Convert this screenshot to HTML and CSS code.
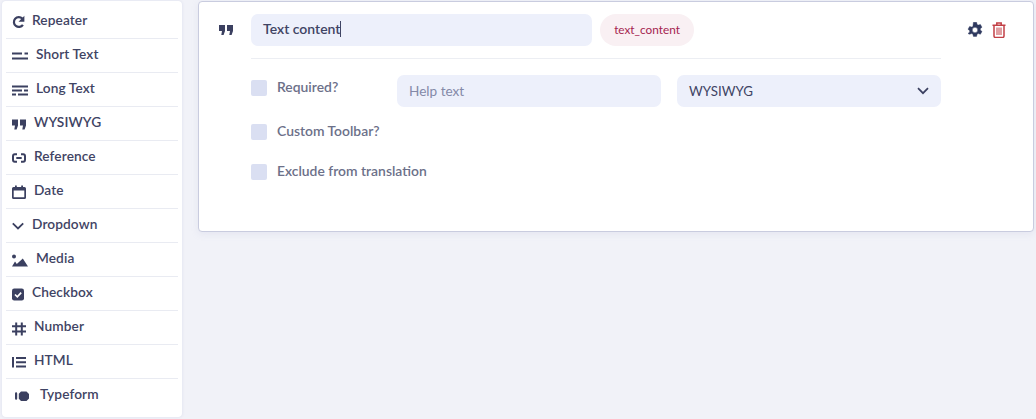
FILE: index.html
```html
<!DOCTYPE html>
<html lang="en">
<head>
<meta charset="utf-8">
<title>Field editor</title>
<link rel="stylesheet" href="styles.css">
</head>
<body>
<div class="page">
  <aside class="sidebar">
    <div class="item"><svg class="ic w14" viewBox="0 0 14 14"><path d="M10.300 3.600A4.900 4.900 0 1 0 10.900 9.800" fill="none" stroke="#3b4060" stroke-width="2.200"/><path d="M12.400 .8v5.900H6.500z" fill="#3b4060"/></svg><span>Repeater</span></div>
    <div class="item"><svg class="ic w16 mr2" viewBox="0 0 16 14"><path d="M0 3.500h10v2H0zM12.500 3.500H16v2h-3.500zM0 8.500h16v2H0z" fill="#3b4060"/></svg><span>Short Text</span></div>
    <div class="item"><svg class="ic w16 mr2" viewBox="0 0 16 14"><path d="M0 2.400h16v2H0zM0 6.500h10v2H0zM12 6.500h4v2h-4zM0 10.600h4v2H0zM6 10.600h10v2H6z" fill="#3b4060"/></svg><span>Long Text</span></div>
    <div class="item"><svg class="ic w14 mr2" viewBox="0 0 14 14"><path d="M0 2.500h6v6l-1.400 4H2.300l.7-4H0zM8 2.500h6v6l-1.400 4h-2.300l.7-4H8z" fill="#3b4060"/></svg><span>WYSIWYG</span></div>
    <div class="item"><svg class="ic w14 mr2" viewBox="0 0 14 14"><path d="M5 3.300H2.800Q1 3.300 1 5.200v3.600q0 1.900 1.800 1.900H5M9 3.300h2.200Q13 3.300 13 5.200v3.600q0 1.900-1.800 1.900H9M4.300 7h5.400" fill="none" stroke="#3b4060" stroke-width="2"/></svg><span>Reference</span></div>
    <div class="item"><svg class="ic w14 mr2" viewBox="0 0 14 14"><path d="M3 .5h1.800V2h4.400V.5H11V2h1.500Q14 2 14 3.500v9Q14 14 12.500 14h-11Q0 14 0 12.500v-9Q0 2 1.500 2H3zM1.700 5.500v6.800h10.600V5.500z" fill="#3b4060"/></svg><span>Date</span></div>
    <div class="item"><svg class="ic w14" viewBox="0 0 14 14"><path d="M.8 4.300L6 9.500l5.200-5.200" fill="none" stroke="#3b4060" stroke-width="1.800"/></svg><span>Dropdown</span></div>
    <div class="item"><svg class="ic w16 mr2" viewBox="0 0 16 14"><circle cx="2" cy="3.500" r="2" fill="#3b4060"/><path d="M0 13.500L3 8.500l1.800 2.600L10.800 5.500l5.200 8z" fill="#3b4060"/></svg><span>Media</span></div>
    <div class="item"><svg class="ic w14" viewBox="0 0 14 14"><rect y="1.500" width="12" height="12" rx="2.200" fill="#3b4060"/><path d="M3 7.500l2.300 2.300L9.200 5.600" fill="none" stroke="#fff" stroke-width="1.700"/></svg><span>Checkbox</span></div>
    <div class="item"><svg class="ic w14 mr2" viewBox="0 0 14 14"><path d="M0 5.300h14M0 10.500h14M4.200 1.500v13M9.800 1.500v13" fill="none" stroke="#3b4060" stroke-width="2"/></svg><span>Number</span></div>
    <div class="item"><svg class="ic w14 mr2" viewBox="0 0 14 14"><path d="M0 2h2v10.500H0zM4 2h10v2H4zM4 6.300h10v2H4zM4 10.500h10v2H4z" fill="#3b4060"/></svg><span>HTML</span></div>
    <div class="item item-last"><svg class="ic w14 mr5" viewBox="0 0 14 14"><path d="M0 4.500Q0 3.300 1.100 3.300T2.200 4.500v5q0 1.200-1.100 1.200T0 9.500zM6 2.500h5.500L14 5v4.500l-2.500 2.500H6L3.800 9.800V4.700z" fill="#3b4060"/></svg><span>Typeform</span></div>
  </aside>
  <main class="main">
    <section class="card">
      <svg class="quote" viewBox="0 0 14 14"><path d="M0 2h6v6l-1.400 4H2.300l.7-4H0zM8 2h6v6l-1.400 4h-2.300l.7-4H8z" fill="#3b4060"/></svg>
      <div class="body">
        <div class="head">
          <div class="title-input"><span>Text content</span><i class="caret"></i></div>
          <div class="pill">text_content</div>
          <div class="actions">
            <svg class="gear" viewBox="0 0 16 16"><path fill-rule="evenodd" d="M6.400.3h3.200l.5 2.200 1.100.6 2.200-.7 1.600 2.800-1.700 1.500v1.300l1.700 1.500-1.600 2.800-2.200-.7-1.100.6-.5 2.200H6.400l-.5-2.200-1.100-.6-2.200.7L1 11.500 2.700 10V8.700L1 7.200l1.600-2.800 2.200.7 1.100-.6zM8 5.300a2.700 2.700 0 1 0 0 5.400 2.700 2.700 0 0 0 0-5.400z" fill="#2f3a5f" stroke="#2f3a5f" stroke-width=".4" stroke-linejoin="round"/></svg>
            <svg class="trash" viewBox="0 0 14 16"><path d="M.5 3.200h13M4.800 3V.9h4.400V3M2 3.200v10.900q0 1.300 1.300 1.300h7.400q1.300 0 1.300-1.300V3.200" fill="none" stroke="#c23f45" stroke-width="1.500"/><path d="M5 5.500v7.500M7 5.500v7.500M9 5.500v7.500" stroke="#c23f45" stroke-width="1"/></svg>
          </div>
        </div>
        <div class="rows">
          <div class="row-top">
            <label class="check"><span class="box"></span><span class="lab">Required?</span></label>
            <div class="field help">Help text</div>
            <div class="field select">WYSIWYG<svg class="chev" viewBox="0 0 12 8"><path d="M1 1.200l5 5 5-5" fill="none" stroke="#3b4060" stroke-width="1.700"/></svg></div>
          </div>
          <label class="check"><span class="box"></span><span class="lab">Custom Toolbar?</span></label>
          <label class="check"><span class="box"></span><span class="lab">Exclude from translation</span></label>
        </div>
      </div>
    </section>
  </main>
</div>
</body>
</html>
```
FILE: styles.css
```css
* { box-sizing: border-box; }
html, body { margin: 0; height: 100%; }
body {
  background: #f1f2f8;
  font-family: "Lato", "Liberation Sans", sans-serif;
  color: #3f4464;
  overflow: hidden;
}
.page { display: flex; align-items: flex-start; gap: 16px; padding: 1px 2px 0; }
.sidebar {
  width: 180px;
  height: 416px;
  flex: none;
  padding: 4px 4px 0;
  background: #fff;
  border-radius: 4px;
  box-shadow: 0 0 3px rgba(190, 195, 225, .45);
}
.item {
  height: 34px;
  display: flex;
  align-items: center;
  gap: 6px;
  padding: 0 0 4px 6px;
  border-bottom: 1px solid #e9ebf2;
  font-size: 13.700px;
  font-weight: 600;
  letter-spacing: .1px;
}
.item-last { border-bottom: 0; padding: 0 0 6px 9px; }
.ic { height: 14px; flex: none; margin-top: 4px; overflow: visible; }
.item-last .ic { margin-top: 6px; }
.w14 { width: 14px; }
.w16 { width: 16px; }
.mr2 { margin-right: 2px; }
.mr5 { margin-right: 5px; }
.main { flex: 1; min-width: 0; }
.card {
  height: 231px;
  display: flex;
  padding: 12px 0 0 20px;
  background: #fff;
  border: 1px solid #c9ccdf;
  border-radius: 4px;
  box-shadow: 0 2px 6px rgba(190, 195, 225, .25);
}
.quote { width: 14px; height: 14px; margin: 9px 18px 0 0; flex: none; }
.body { width: 690px; }
.head {
  position: relative;
  display: flex;
  gap: 8px;
  padding-bottom: 12px;
  border-bottom: 1px solid #eceef3;
}
.title-input {
  width: 341px;
  height: 32px;
  display: flex;
  align-items: center;
  padding: 0 0 3px 12px;
  background: #edf0fb;
  border-radius: 7px;
  font-size: 14px;
  font-weight: 600;
}
.caret { width: 1px; height: 16px; background: #3f4464; }
.pill {
  width: 94px;
  height: 32px;
  display: flex;
  align-items: center;
  justify-content: center;
  padding-bottom: 2px;
  border-radius: 16px;
  background: #f9f0f3;
  color: #a5244f;
  font-size: 11.800px;
}
.actions {
  position: absolute;
  left: 716px;
  top: 8px;
  display: flex;
  gap: 9px;
  align-items: center;
}
.gear { width: 16px; height: 16px; }
.trash { width: 14px; height: 16px; }
.rows { display: flex; flex-direction: column; align-items: flex-start; padding-top: 16px; }
.row-top { display: flex; width: 690px; margin-bottom: 17px; }
.check {
  display: flex;
  align-items: center;
  gap: 10px;
  height: 16px;
  font-size: 13.900px;
  font-weight: 600;
  color: #6c7089;
}
.lab { margin-top: -4px; }
.rows > .check { margin-bottom: 24px; }
.row-top .check { width: 146px; margin-top: 5px; }
.box { width: 16px; height: 16px; flex: none; border-radius: 2px; background: #dadff2; }
.field {
  height: 32px;
  display: flex;
  align-items: center;
  padding: 0 12px;
  background: #edf0fb;
  border-radius: 7px;
  font-size: 13.600px;
}
.help { width: 264px; margin-right: 16px; color: #8489a8; }
.select { width: 264px; justify-content: space-between; font-size: 13.300px; }
.chev { width: 12px; height: 8px; }
```
